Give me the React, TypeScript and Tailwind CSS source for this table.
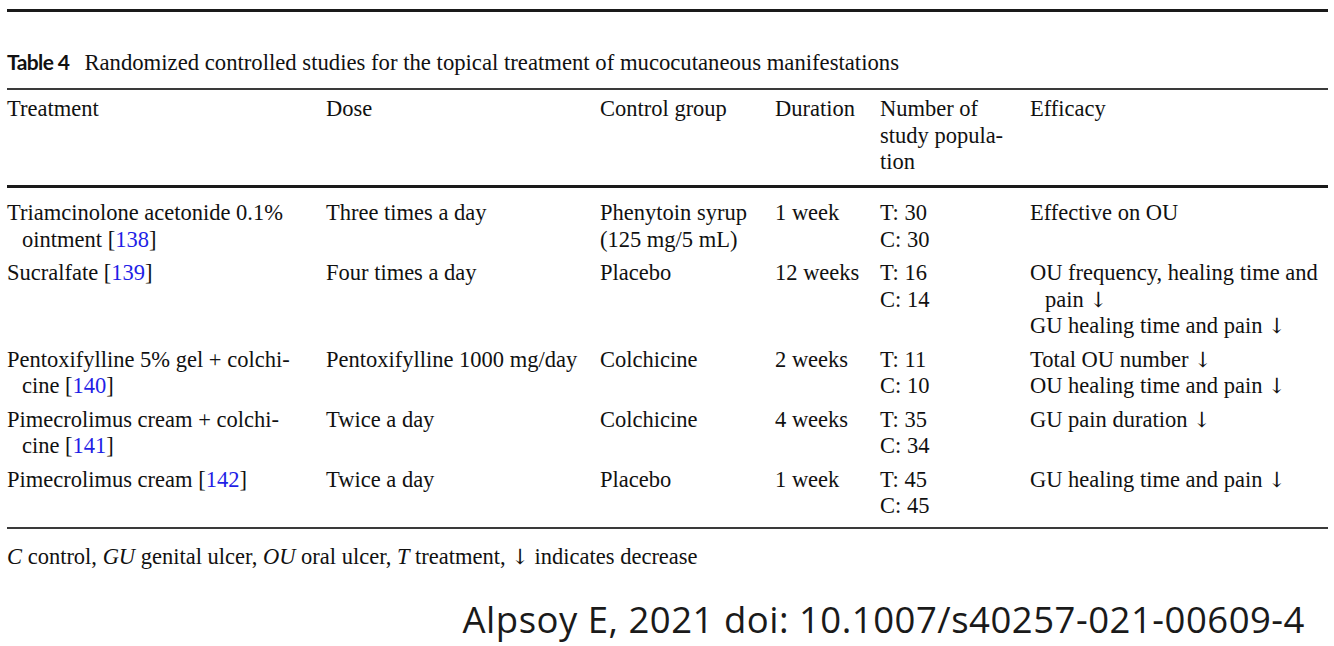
import React from "react";

const serif = { fontFamily: '"Liberation Serif", "Times New Roman", serif' };

function Arrow() {
  return (
    <span style={{ fontFamily: '"DejaVu Serif", serif' }} className="text-[#111] text-[21px] leading-none">
      ↓
    </span>
  );
}

function L({ children, indent = false }: { children: React.ReactNode; indent?: boolean }) {
  return <div className={indent ? "pl-[15px] whitespace-nowrap" : "whitespace-nowrap"}>{children}</div>;
}

function Ref({ n }: { n: string }) {
  return (
    <>
      [<span className="text-[#1f1fe6]">{n}</span>]
    </>
  );
}

const rows: React.ReactNode[][] = [
  [
    <>
      <L>Triamcinolone acetonide 0.1%</L>
      <L indent>ointment <Ref n="138" /></L>
    </>,
    <L>Three times a day</L>,
    <>
      <L>Phenytoin syrup</L>
      <L>(125 mg/5 mL)</L>
    </>,
    <L>1 week</L>,
    <>
      <L>T: 30</L>
      <L>C: 30</L>
    </>,
    <L>Effective on OU</L>,
  ],
  [
    <L>Sucralfate <Ref n="139" /></L>,
    <L>Four times a day</L>,
    <L>Placebo</L>,
    <L>12 weeks</L>,
    <>
      <L>T: 16</L>
      <L>C: 14</L>
    </>,
    <>
      <L>OU frequency, healing time and</L>
      <L indent>pain <Arrow /></L>
      <L>GU healing time and pain <Arrow /></L>
    </>,
  ],
  [
    <>
      <L>Pentoxifylline 5% gel + colchi-</L>
      <L indent>cine <Ref n="140" /></L>
    </>,
    <L>Pentoxifylline 1000 mg/day</L>,
    <L>Colchicine</L>,
    <L>2 weeks</L>,
    <>
      <L>T: 11</L>
      <L>C: 10</L>
    </>,
    <>
      <L>Total OU number <Arrow /></L>
      <L>OU healing time and pain <Arrow /></L>
    </>,
  ],
  [
    <>
      <L>Pimecrolimus cream + colchi-</L>
      <L indent>cine <Ref n="141" /></L>
    </>,
    <L>Twice a day</L>,
    <L>Colchicine</L>,
    <L>4 weeks</L>,
    <>
      <L>T: 35</L>
      <L>C: 34</L>
    </>,
    <L>GU pain duration <Arrow /></L>,
  ],
  [
    <L>Pimecrolimus cream <Ref n="142" /></L>,
    <L>Twice a day</L>,
    <L>Placebo</L>,
    <L>1 week</L>,
    <>
      <L>T: 45</L>
      <L>C: 45</L>
    </>,
    <L>GU healing time and pain <Arrow /></L>,
  ],
];

const cols = "grid grid-cols-[319px_274px_175px_105px_150px_298px]";

export default function App() {
  return (
    <div className="w-[1334px] h-[646px] bg-white text-[#111] overflow-hidden" style={serif}>
      <div className="pl-[7px] pr-[6px] pt-[9px]">
        <div className="h-[3px] bg-[#1a1a1a]" />
        <div className="mt-[37px] flex items-baseline text-[22.7px] leading-[26px]">
          <span
            className="font-bold text-[21px] tracking-[-0.6px] mr-[15px]"
            style={{ fontFamily: 'Lato, "Open Sans", sans-serif' }}
          >
            Table 4
          </span>
          <span>Randomized controlled studies for the topical treatment of mucocutaneous manifestations</span>
        </div>
        <div className="mt-[12px] h-[2px] bg-[#3a3a3a]" />
        <div className={`${cols} text-[22.5px] leading-[26.7px] pt-[6px] pb-[9px]`}>
          <L>Treatment</L>
          <L>Dose</L>
          <L>Control group</L>
          <L>Duration</L>
          <div>
            <L>Number of</L>
            <L>study popula-</L>
            <L>tion</L>
          </div>
          <L>Efficacy</L>
        </div>
        <div className="h-[3px] bg-[#1a1a1a]" />
        <div className="pt-[12px] pb-[7px]">
          {rows.map((r, i) => (
            <div key={i} className={`${cols} text-[22.5px] leading-[26.5px] ${i > 0 ? "mt-[7px]" : ""}`}>
              {r.map((c, j) => (
                <div key={j}>{c}</div>
              ))}
            </div>
          ))}
        </div>
        <div className="h-[2px] bg-[#3a3a3a]" />
        <div className="mt-[15px] text-[22.5px] leading-[26px] whitespace-nowrap">
          <i>C</i> control, <i>GU</i> genital ulcer, <i>OU</i> oral ulcer, <i>T</i> treatment, <Arrow /> indicates
          decrease
        </div>
        <div className="mt-[27px] flex justify-end pr-[23px]">
          <span
            className="text-[36.5px] leading-[44px] tracking-[0.5px] text-[#1a1a1a]"
            style={{ fontFamily: '"Open Sans", "Noto Sans", sans-serif' }}
          >
            Alpsoy E, 2021 doi: 10.1007/s40257-021-00609-4
          </span>
        </div>
      </div>
    </div>
  );
}
